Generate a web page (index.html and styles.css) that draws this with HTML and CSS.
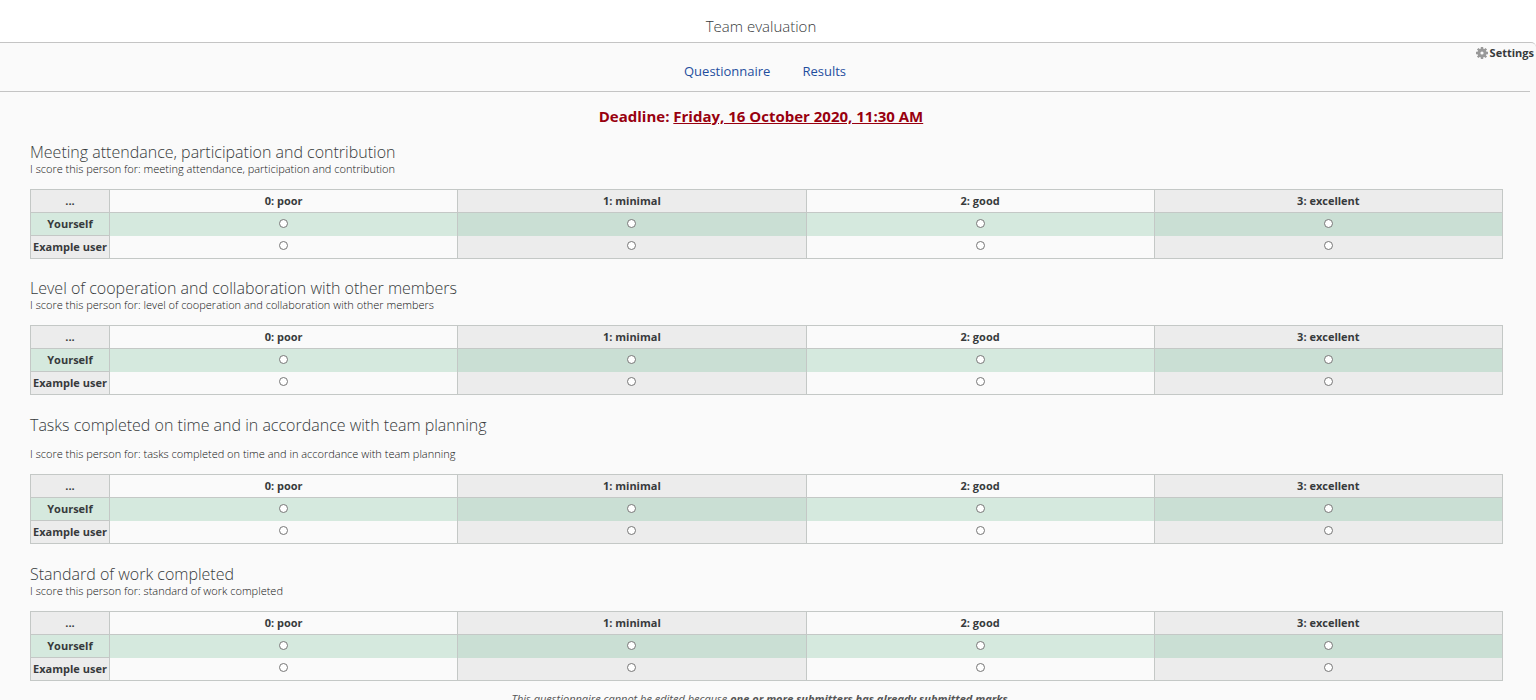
FILE: index.html
```html
<!DOCTYPE html>
<html lang="en">
<head>
<meta charset="utf-8">
<title>Team evaluation</title>
<link rel="stylesheet" href="styles.css">
</head>
<body>
<header class="page-header"><h1 class="title">Team evaluation</h1></header>
<main class="panel">
  <div class="tabs-bar">
    <nav class="tabs">
      <a class="tab" href="#questionnaire">Questionnaire</a>
      <a class="tab" href="#results">Results</a>
    </nav>
    <a class="settings" href="#settings">
      <svg class="gear" viewBox="0 0 12 12" aria-hidden="true"><g fill="#999"><path d="M4.8 0h2.4v12H4.8zM0 4.8h12v2.4H0z"/><path d="M4.8 0h2.4v12H4.8zM0 4.8h12v2.4H0z" transform="rotate(45 6 6)"/></g><circle cx="6" cy="6" r="3.1" fill="#fafafa" stroke="#999" stroke-width="3"/></svg>
      <span>Settings</span>
    </a>
  </div>
  <p class="deadline">Deadline: <span class="date">Friday, 16 October 2020, 11:30 AM</span></p>
  <form class="questions" id="questionnaire">
    <section class="question">
      <h2 class="heading" id="q1">Meeting attendance, participation and contribution</h2>
      <p class="hint">I score this person for: meeting attendance, participation and contribution</p>
      <table class="grid" aria-labelledby="q1">
        <thead><tr><th class="name" scope="col">...</th><th scope="col">0: poor</th><th scope="col">1: minimal</th><th scope="col">2: good</th><th scope="col">3: excellent</th></tr></thead>
        <tbody>
          <tr class="self"><th class="name" scope="row">Yourself</th><td><input type="radio" name="q1-self" aria-label="Yourself, 0: poor"></td><td><input type="radio" name="q1-self" aria-label="Yourself, 1: minimal"></td><td><input type="radio" name="q1-self" aria-label="Yourself, 2: good"></td><td><input type="radio" name="q1-self" aria-label="Yourself, 3: excellent"></td></tr>
          <tr><th class="name" scope="row">Example user</th><td><input type="radio" name="q1-user" aria-label="Example user, 0: poor"></td><td><input type="radio" name="q1-user" aria-label="Example user, 1: minimal"></td><td><input type="radio" name="q1-user" aria-label="Example user, 2: good"></td><td><input type="radio" name="q1-user" aria-label="Example user, 3: excellent"></td></tr>
        </tbody>
      </table>
    </section>
    <section class="question">
      <h2 class="heading" id="q2">Level of cooperation and collaboration with other members</h2>
      <p class="hint">I score this person for: level of cooperation and collaboration with other members</p>
      <table class="grid" aria-labelledby="q2">
        <thead><tr><th class="name" scope="col">...</th><th scope="col">0: poor</th><th scope="col">1: minimal</th><th scope="col">2: good</th><th scope="col">3: excellent</th></tr></thead>
        <tbody>
          <tr class="self"><th class="name" scope="row">Yourself</th><td><input type="radio" name="q2-self" aria-label="Yourself, 0: poor"></td><td><input type="radio" name="q2-self" aria-label="Yourself, 1: minimal"></td><td><input type="radio" name="q2-self" aria-label="Yourself, 2: good"></td><td><input type="radio" name="q2-self" aria-label="Yourself, 3: excellent"></td></tr>
          <tr><th class="name" scope="row">Example user</th><td><input type="radio" name="q2-user" aria-label="Example user, 0: poor"></td><td><input type="radio" name="q2-user" aria-label="Example user, 1: minimal"></td><td><input type="radio" name="q2-user" aria-label="Example user, 2: good"></td><td><input type="radio" name="q2-user" aria-label="Example user, 3: excellent"></td></tr>
        </tbody>
      </table>
    </section>
    <section class="question spaced">
      <h2 class="heading" id="q3">Tasks completed on time and in accordance with team planning</h2>
      <p class="hint">I score this person for: tasks completed on time and in accordance with team planning</p>
      <table class="grid" aria-labelledby="q3">
        <thead><tr><th class="name" scope="col">...</th><th scope="col">0: poor</th><th scope="col">1: minimal</th><th scope="col">2: good</th><th scope="col">3: excellent</th></tr></thead>
        <tbody>
          <tr class="self"><th class="name" scope="row">Yourself</th><td><input type="radio" name="q3-self" aria-label="Yourself, 0: poor"></td><td><input type="radio" name="q3-self" aria-label="Yourself, 1: minimal"></td><td><input type="radio" name="q3-self" aria-label="Yourself, 2: good"></td><td><input type="radio" name="q3-self" aria-label="Yourself, 3: excellent"></td></tr>
          <tr><th class="name" scope="row">Example user</th><td><input type="radio" name="q3-user" aria-label="Example user, 0: poor"></td><td><input type="radio" name="q3-user" aria-label="Example user, 1: minimal"></td><td><input type="radio" name="q3-user" aria-label="Example user, 2: good"></td><td><input type="radio" name="q3-user" aria-label="Example user, 3: excellent"></td></tr>
        </tbody>
      </table>
    </section>
    <section class="question">
      <h2 class="heading" id="q4">Standard of work completed</h2>
      <p class="hint">I score this person for: standard of work completed</p>
      <table class="grid" aria-labelledby="q4">
        <thead><tr><th class="name" scope="col">...</th><th scope="col">0: poor</th><th scope="col">1: minimal</th><th scope="col">2: good</th><th scope="col">3: excellent</th></tr></thead>
        <tbody>
          <tr class="self"><th class="name" scope="row">Yourself</th><td><input type="radio" name="q4-self" aria-label="Yourself, 0: poor"></td><td><input type="radio" name="q4-self" aria-label="Yourself, 1: minimal"></td><td><input type="radio" name="q4-self" aria-label="Yourself, 2: good"></td><td><input type="radio" name="q4-self" aria-label="Yourself, 3: excellent"></td></tr>
          <tr><th class="name" scope="row">Example user</th><td><input type="radio" name="q4-user" aria-label="Example user, 0: poor"></td><td><input type="radio" name="q4-user" aria-label="Example user, 1: minimal"></td><td><input type="radio" name="q4-user" aria-label="Example user, 2: good"></td><td><input type="radio" name="q4-user" aria-label="Example user, 3: excellent"></td></tr>
        </tbody>
      </table>
    </section>
  </form>
  <p class="note">This questionnaire cannot be edited because <strong>one or more submitters has already submitted marks</strong>.</p>
</main>
</body>
</html>
```
FILE: styles.css
```css
* { box-sizing: border-box; }
html { scrollbar-width: none; }
body {
  margin: 0;
  background: #fff;
  color: #373a3c;
  font-family: "Open Sans", "Noto Sans", sans-serif;
  font-size: 11px;
  line-height: 16px;
}
h1, h2, p { margin: 0; }
.page-header { padding: 16px 14px 6px 0; text-align: center; }
.title { font-size: 15px; line-height: 20px; font-weight: 300; }
.panel {
  background: #fafafa;
  border-top: 1px solid #c4c4c4;
  border-top-right-radius: 5px;
  padding-bottom: 20px;
}
.tabs-bar {
  position: relative;
  margin-right: 6px;
  padding: 18px 0 10px;
  border-bottom: 1px solid #c4c4c4;
}
.tabs { display: flex; justify-content: center; gap: 32px; }
.tab { color: #1f4e9e; font-size: 13px; line-height: 20px; text-decoration: none; }
.settings {
  position: absolute;
  top: 2px;
  right: -4px;
  display: flex;
  align-items: center;
  gap: 2px;
  color: #373a3c;
  font-weight: 700;
  text-decoration: none;
}
.gear { width: 12px; height: 12px; }
.deadline {
  padding: 14px 14px 17px 0;
  text-align: center;
  color: #98000f;
  font-size: 15px;
  line-height: 20px;
  font-weight: 700;
}
.date { text-decoration: underline; }
.questions { display: flex; flex-direction: column; gap: 20px; padding: 0 33px 0 30px; }
.heading { font-size: 16px; line-height: 18px; font-weight: 300; }
.hint { margin-bottom: 12px; color: #111; font-weight: 300; }
.spaced { padding: 1px 0; }
.spaced .hint { margin-top: 12px; }
.grid { width: 100%; table-layout: fixed; border-collapse: collapse; border: 1px solid #c4c8c6; }
.grid th, .grid td {
  height: 23px;
  padding: 0;
  text-align: center;
  vertical-align: middle;
  border-left: 1px solid #c4c8c6;
  border-right: 1px solid #c4c8c6;
}
.grid td { padding-bottom: 2px; }
.grid th { border: 1px solid #c4c8c6; font-weight: 700; }
.grid .name { width: 79px; background: #ececec; }
.grid th:nth-child(odd), .grid td:nth-child(odd) { background: #ececec; }
.grid .self .name, .grid .self td { background: #d5e9de; }
.grid .self td:nth-child(odd) { background: #cadfd4; }
.grid input {
  appearance: none;
  display: block;
  width: 9px;
  height: 9px;
  margin: 0 auto;
  border: 1px solid #767676;
  border-radius: 50%;
  background: #fff;
}
.note { padding: 10px 14px 0 0; text-align: center; font-style: italic; color: #555; }
```
